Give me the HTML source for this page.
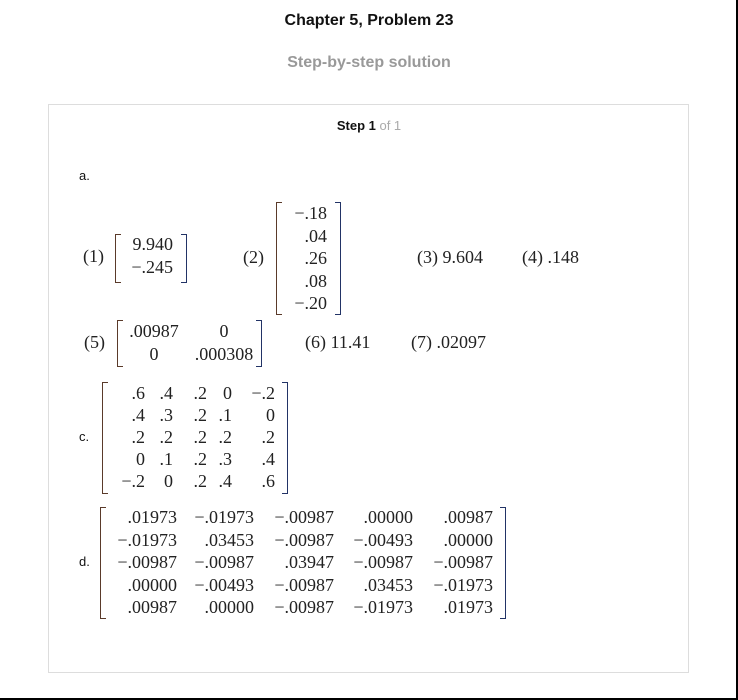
<!DOCTYPE html>
<html><head><meta charset="utf-8">
<style>
html,body{margin:0;padding:0;}
body{width:738px;height:700px;position:relative;background:#fff;overflow:hidden;font-family:"Liberation Sans",sans-serif;}
.frame{position:absolute;left:0;top:0;width:736px;height:698px;border-right:2px solid #000;border-bottom:2px solid #000;}
.h1{position:absolute;left:0;width:738px;top:12px;text-align:center;font-weight:bold;font-size:16px;color:#111;}
.h2{position:absolute;left:0;width:738px;top:54px;text-align:center;font-weight:bold;font-size:16px;color:#999;}
.box{position:absolute;left:48px;top:104px;width:639px;height:567px;border:1px solid #ddd;}
.step{position:absolute;left:0;width:738px;top:118px;text-align:center;font-size:13px;font-weight:bold;color:#111;}
.step span{font-weight:normal;color:#aaa;}
.lbl{position:absolute;font-size:13px;color:#111;}
.m{position:absolute;font-family:"Liberation Serif",serif;font-size:18px;line-height:22.5px;color:#222;white-space:nowrap;}
.r{text-align:right;}
.c{text-align:center;}
.bl{position:absolute;border:1.2px solid #5a3a2a;border-right:none;width:5px;}
.br{position:absolute;border:1.2px solid #223366;border-left:none;width:5px;}
</style></head><body>
<div class="frame"></div>
<div class="h1">Chapter 5, Problem 23</div>
<div class="h2">Step-by-step solution</div>
<div class="box"></div>
<div class="step">Step 1 <span>of 1</span></div>
<div class="lbl" style="left:79px;top:168px">a.</div>

<div class="m" style="left:83px;top:245px">(1)</div>
<div class="bl" style="left:115px;top:234px;height:47px"></div>
<div class="br" style="left:181px;top:234px;height:47px"></div>
<div class="m r" style="left:120px;width:53px;top:233px">9.940<br>−.245</div>

<div class="m" style="left:243px;top:246px">(2)</div>
<div class="bl" style="left:276px;top:202px;height:111px"></div>
<div class="br" style="left:335px;top:202px;height:111px"></div>
<div class="m r" style="left:280px;width:47px;top:202px">−.18<br>.04<br>.26<br>.08<br>−.20</div>

<div class="m" style="left:417px;top:246px">(3) 9.604</div>
<div class="m" style="left:522px;top:246px">(4) .148</div>

<div class="m" style="left:84px;top:331px">(5)</div>
<div class="bl" style="left:117px;top:320px;height:45px"></div>
<div class="br" style="left:256px;top:320px;height:45px"></div>
<div class="m c" style="left:128px;width:52px;top:320px">.00987<br>0</div>
<div class="m c" style="left:194px;width:60px;top:320px">0<br>.000308</div>

<div class="m" style="left:305px;top:331px">(6) 11.41</div>
<div class="m" style="left:411px;top:331px">(7) .02097</div>

<div class="lbl" style="left:79px;top:429px">c.</div>
<div class="bl" style="left:102px;top:382px;height:110px"></div>
<div class="br" style="left:282px;top:382px;height:110px"></div>
<div class="m r" style="left:105px;width:40px;top:382px;line-height:22px">.6<br>.4<br>.2<br>0<br>−.2</div>
<div class="m r" style="left:148px;width:25px;top:382px;line-height:22px">.4<br>.3<br>.2<br>.1<br>0</div>
<div class="m r" style="left:180px;width:27px;top:382px;line-height:22px">.2<br>.2<br>.2<br>.2<br>.2</div>
<div class="m r" style="left:210px;width:22px;top:382px;line-height:22px">0<br>.1<br>.2<br>.3<br>.4</div>
<div class="m r" style="left:240px;width:35px;top:382px;line-height:22px">−.2<br>0<br>.2<br>.4<br>.6</div>

<div class="lbl" style="left:79px;top:554px">d.</div>
<div class="bl" style="left:100px;top:507px;height:110px"></div>
<div class="br" style="left:500px;top:507px;height:110px"></div>
<div class="m r" style="left:105px;width:72px;top:506px">.01973<br>−.01973<br>−.00987<br>.00000<br>.00987</div>
<div class="m r" style="left:182px;width:72px;top:506px">−.01973<br>.03453<br>−.00987<br>−.00493<br>.00000</div>
<div class="m r" style="left:262px;width:72px;top:506px">−.00987<br>−.00987<br>.03947<br>−.00987<br>−.00987</div>
<div class="m r" style="left:341px;width:72px;top:506px">.00000<br>−.00493<br>−.00987<br>.03453<br>−.01973</div>
<div class="m r" style="left:421px;width:72px;top:506px">.00987<br>.00000<br>−.00987<br>−.01973<br>.01973</div>
</body></html>
